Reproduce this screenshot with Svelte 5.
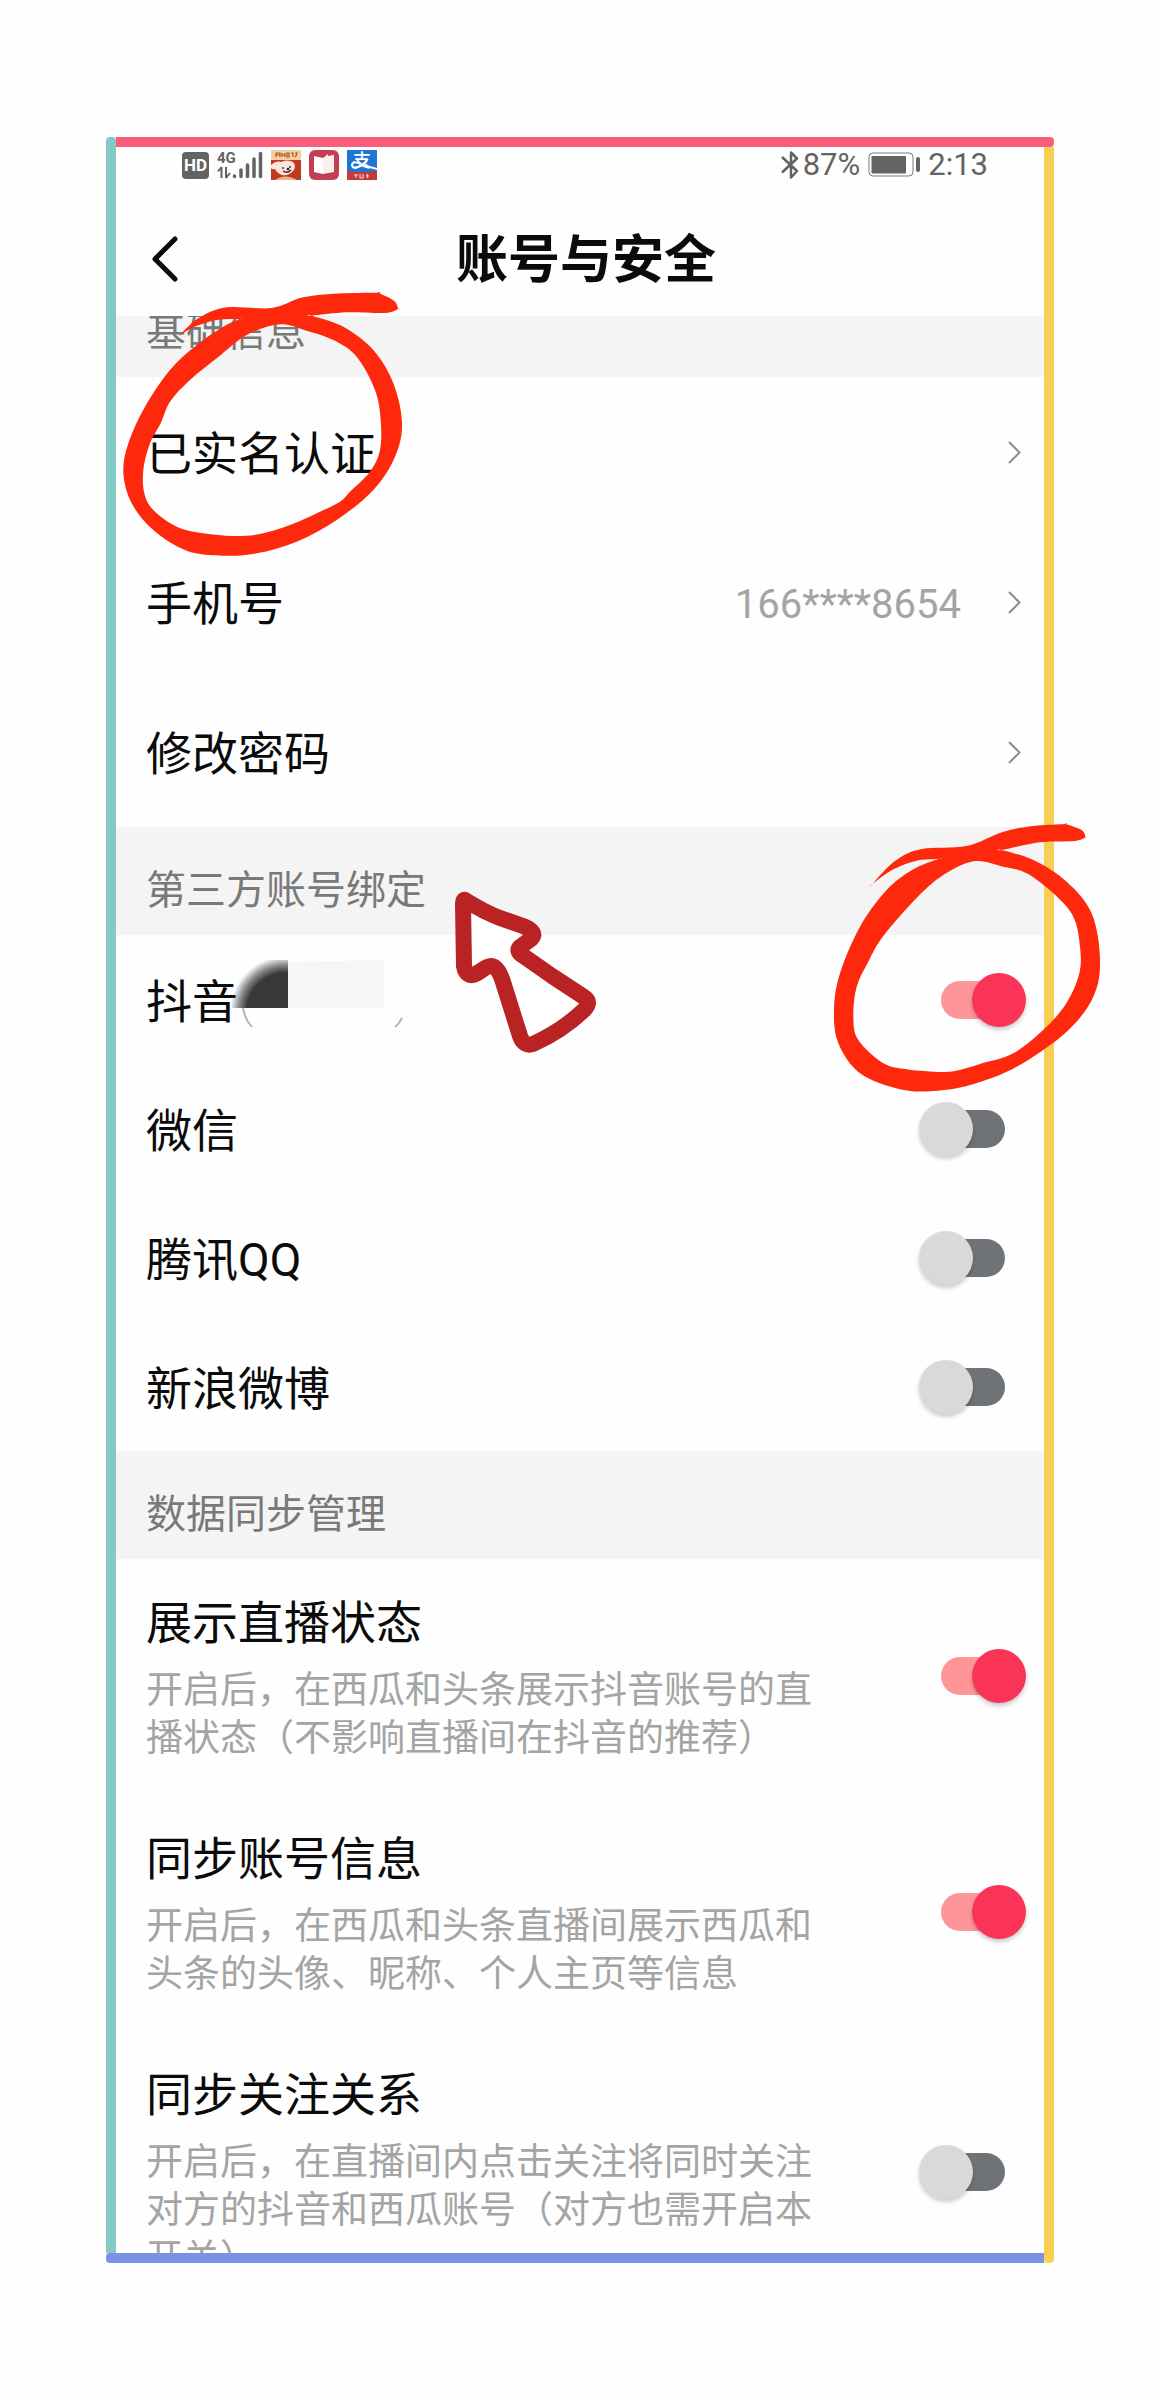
<script lang="ts">
  interface SyncItem {
    id: string;
    title: string;
    description: string;
    enabled: boolean;
  }

  type Point = [number, number];

  const links = [
    { id: 'realname', label: '已实名认证', value: '' },
    { id: 'phone', label: '手机号', value: '166****8654' },
    { id: 'password', label: '修改密码', value: '' },
  ];

  let accounts = [
    { id: 'douyin', label: '抖音', enabled: true, masked: true },
    { id: 'wechat', label: '微信', enabled: false, masked: false },
    { id: 'qq', label: '腾讯QQ', enabled: false, masked: false },
    { id: 'weibo', label: '新浪微博', enabled: false, masked: false },
  ];

  let syncItems: SyncItem[] = [
    {
      id: 'live',
      title: '展示直播状态',
      description: '开启后，在西瓜和头条展示抖音账号的直播状态（不影响直播间在抖音的推荐）',
      enabled: true,
    },
    {
      id: 'profile',
      title: '同步账号信息',
      description: '开启后，在西瓜和头条直播间展示西瓜和头条的头像、昵称、个人主页等信息',
      enabled: true,
    },
    {
      id: 'follow',
      title: '同步关注关系',
      description: '开启后，在直播间内点击关注将同时关注对方的抖音和西瓜账号（对方也需开启本开关）',
      enabled: false,
    },
  ];

  // marker strokes: outer edge, then the hole inside the loop
  const markLeft: Point[][] = [
    [
      [265, 140], [265, 140], [325, 85], [410, 52], [545, 54], [640, 22], [760, 10], [865, 8], [865, 8], [912, 32],
      [925, 57], [925, 57], [885, 69], [770, 67], [665, 77], [665, 77], [760, 110], [850, 180], [910, 280], [936, 400],
      [915, 500], [850, 600], [740, 690], [620, 755], [500, 790], [400, 797], [290, 782], [190, 720], [125, 640],
      [100, 550], [115, 460], [165, 350], [240, 240], [320, 165], [400, 110], [450, 87], [450, 87], [380, 90], [310, 112],
    ],
    [
      [570, 103], [470, 135], [380, 205], [300, 270], [240, 335], [212, 400], [180, 460], [160, 540], [163, 610],
      [190, 660], [260, 710], [340, 730], [430, 738], [510, 732], [600, 705], [690, 665], [750, 635], [780, 605],
      [840, 545], [870, 480], [872, 390], [855, 300], [800, 200], [730, 150], [650, 122],
    ],
  ];

  const markRight: Point[][] = [
    [
      [217, 312], [217, 312], [285, 243], [365, 207], [500, 198], [610, 155], [700, 138], [797, 132], [797, 132],
      [845, 150], [857, 172], [857, 172], [825, 183], [720, 187], [605, 210], [605, 210], [700, 240], [800, 305],
      [875, 400], [900, 540], [880, 650], [800, 755], [650, 860], [510, 915], [400, 933], [300, 928], [180, 880],
      [115, 790], [102, 690], [120, 580], [180, 440], [260, 330], [340, 268], [415, 237], [415, 237], [350, 242],
      [280, 268],
    ],
    [
      [520, 244], [420, 292], [330, 375], [245, 475], [205, 545], [170, 620], [160, 710], [175, 780], [250, 850],
      [320, 868], [400, 875], [465, 873], [540, 852], [640, 820], [735, 745], [800, 668], [838, 580], [840, 500],
      [820, 410], [760, 340], [680, 280], [610, 260],
    ],
  ];

  function smooth(points: Point[]): string {
    const n = points.length;
    let d = `M${points[0][0]} ${points[0][1]}`;
    for (let i = 0; i < n; i++) {
      const p0 = points[(i - 1 + n) % n];
      const p1 = points[i];
      const p2 = points[(i + 1) % n];
      const p3 = points[(i + 2) % n];
      d += `C${p1[0] + (p2[0] - p0[0]) / 6} ${p1[1] + (p2[1] - p0[1]) / 6}`;
      d += ` ${p2[0] - (p3[0] - p1[0]) / 6} ${p2[1] - (p3[1] - p1[1]) / 6}`;
      d += ` ${p2[0]} ${p2[1]}`;
    }
    return d + 'Z';
  }

  const markPath = (outlines: Point[][]) => outlines.map(smooth).join('');
</script>

<main class="page">
  <div class="frame">
    <i class="edge edge-top"></i>
    <i class="edge edge-left"></i>
    <i class="edge edge-right"></i>
    <i class="edge edge-bottom"></i>

    <div class="screen">
      <div class="status">
        <div class="status-group">
          <span class="hd">HD</span>
          <svg class="signal" width="46" height="30" viewBox="0 0 46 30" aria-label="4G">
            <text x="0" y="13" font-size="15">4G</text>
            <path d="M4.500 17V28M4.500 17L1 21.500M9 17V28M9 28L13 23" fill="none" stroke="#636363" stroke-width="2" />
            <path d="M17.500 26V26.500M24 20V26.500M30.500 15V26.500M37 9V26.500M43.500 3.500V26.500" stroke="#636363" stroke-width="3.500" stroke-linecap="round" />
          </svg>
          <div class="apps">
            <svg width="30" height="30" viewBox="0 0 30 30">
              <rect width="30" height="30" fill="#c03a26" />
              <rect width="30" height="10" fill="#f6cfa0" />
              <path d="M5 3H9V7M5 3V7M5 5H9M11 3V7M11 5H14M14 3V7M16 3V7H18V3ZM20 3H22V7M24 3H26L24.500 7" fill="none" stroke="#a8542c" stroke-width="1.200" />
              <path d="M0 15Q5 10 10 12Q16 9 22 12Q26 16 22 21Q18 26 11 25Q6 23 4 19Q1 20 0 18Z" fill="#fbe6dc" />
              <path d="M12 17V19M19 16V18M12 21Q16 24 20 20" fill="none" stroke="#43241e" stroke-width="1.400" />
              <circle cx="17" cy="19" r="1.300" fill="#2b1a1a" />
              <path d="M4 30Q14 23 26 30Z" fill="#e9b48d" />
            </svg>
            <svg width="30" height="30" viewBox="0 0 30 30">
              <rect width="30" height="30" rx="6" fill="#c43e53" />
              <path d="M5 6L14 8V24L5 22Z" fill="#fff" />
              <path d="M14 8L19 4V6L25 5V22L14 24Z" fill="#fdeef0" />
            </svg>
            <svg width="30" height="30" viewBox="0 0 30 30">
              <rect width="30" height="30" fill="#1f75d3" />
              <text class="alipay" x="6" y="17" font-size="18">支</text>
              <path d="M14 14Q6 10 5 15Q6 20 13 16Q20 12 20 9M17 14Q23 18 30 19" fill="none" stroke="#fff" stroke-width="2" />
              <path d="M0 21Q15 23 30 21V30H0Z" fill="#c23b3b" />
              <path d="M7 25H11M9 24V28M13 24V28H16V24M19 26H22M20.500 24V28" fill="none" stroke="#f3d0c8" stroke-width="1.200" />
            </svg>
          </div>
        </div>
        <div class="status-group status-right">
          <svg width="18" height="30" viewBox="0 0 18 30">
            <path d="M1 7L16 21L10 27.500V2.500L16 8.500L1 22.500" fill="none" stroke="#636363" stroke-width="2.500" stroke-linejoin="round" />
          </svg>
          <span>87%</span>
          <svg class="battery" width="52" height="26" viewBox="0 0 52 26">
            <rect x="1" y="1" width="44" height="23" rx="4" fill="none" stroke="#7a7a7a" />
            <rect x="3.500" y="4" width="34.500" height="17.500" rx="1" fill="#636363" />
            <rect x="48" y="5" width="4" height="15" rx="2" fill="#636363" />
          </svg>
          <span>2:13</span>
        </div>
      </div>

      <header class="header">
        <button class="back" type="button" aria-label="返回">
          <svg width="26" height="46" viewBox="0 0 26 46">
            <path d="M23 3L3 23L23 43" fill="none" stroke="#0b0b0b" stroke-width="5" stroke-linecap="round" stroke-linejoin="round" />
          </svg>
        </button>
        <h1>账号与安全</h1>
      </header>

      <div class="list">
        <h2 class="section section-scrolled">基础信息</h2>
        {#each links as link (link.id)}
          <a class="row row-link" href="#{link.id}">
            <span class="label">{link.label}</span>
            <span class="value">{link.value}</span>
            <svg width="13" height="23" viewBox="0 0 13 23">
              <path d="M1 1L11.500 11.500L1 22" fill="none" stroke="#8e8e8e" stroke-width="2" />
            </svg>
          </a>
        {/each}

        <h2 class="section">第三方账号绑定</h2>
        {#each accounts as account (account.id)}
          <div class="row row-account">
            <label class="label" for={account.id}>{account.label}</label>
            {#if account.masked}
              <svg class="mask" width="180" height="72" viewBox="0 0 180 72">
                <defs>
                  <radialGradient id="smudge" gradientUnits="userSpaceOnUse" cx="54" cy="52" r="56">
                    <stop offset="0.700" stop-color="#383838" />
                    <stop offset="0.840" stop-color="#383838" stop-opacity="0.600" />
                    <stop offset="1" stop-color="#383838" stop-opacity="0" />
                  </radialGradient>
                </defs>
                <rect x="0" y="0" width="56" height="48" fill="url(#smudge)" />
                <path d="M56 2L152 0V48H56Z" fill="#f6f6f4" />
                <path d="M11 48Q13 60 20 67M170 58Q167 64 163 67" fill="none" stroke="#b5b5b5" stroke-width="2" />
              </svg>
            {/if}
            <input class="switch" id={account.id} type="checkbox" role="switch" bind:checked={account.enabled} />
          </div>
        {/each}

        <h2 class="section">数据同步管理</h2>
        {#each syncItems as item (item.id)}
          <div class="row row-sync">
            <div class="text">
              <label class="label" for={item.id}>{item.title}</label>
              <p class="description">{item.description}</p>
            </div>
            <input class="switch" id={item.id} type="checkbox" role="switch" bind:checked={item.enabled} />
          </div>
        {/each}
      </div>
    </div>

    <svg class="mark mark-left" width="400" height="300" viewBox="0 0 1200 900">
      <path d={markPath(markLeft)} fill="#fe280c" fill-rule="evenodd" />
    </svg>
    <svg class="mark mark-right" width="320" height="400" viewBox="0 0 960 1200">
      <path d={markPath(markRight)} fill="#fe280c" fill-rule="evenodd" />
    </svg>
    <svg class="mark mark-arrow" width="160" height="170" viewBox="0 0 160 170">
      <path
        d="M15 10C28 18 36 23 50 28L73 36Q88 42 81 49L70 57Q66 61 72 65L102 86L134 107Q142 112 134 120Q112 141 83 154Q74 157 70 146L53 92Q48 76 41 76C34 76 26 87 20 85Q15 83 14 76L13 14Q13 9 15 10Z"
        fill="#fff"
        stroke="#b92323"
        stroke-width="16"
        stroke-linejoin="round"
      />
    </svg>
  </div>
</main>

<style>
  :global(body) {
    background: #fefefe;
  }

  .page {
    display: flex;
    box-sizing: border-box;
    height: 100vh;
    padding: 137px 100px 137px 106px;
    font-family: Roboto, 'Noto Sans CJK SC', sans-serif;
    color: #0b0b0b;
  }

  .frame {
    position: relative;
    flex: 1;
    min-width: 0;
    display: grid;
    grid-template-columns: 10px minmax(0, 1fr) 10px;
    grid-template-rows: 10px minmax(0, 1fr) 10px;
    grid-template-areas:
      'left top top'
      'left screen right'
      'bottom bottom right';
  }

  .edge-top {
    grid-area: top;
    background: #f85e7b;
    border-radius: 0 4px 4px 0;
  }

  .edge-left {
    grid-area: left;
    background: #85c9c6;
    border-radius: 4px 4px 0 0;
  }

  .edge-right {
    grid-area: right;
    background: #f9cf53;
    border-radius: 0 0 4px 4px;
  }

  .edge-bottom {
    grid-area: bottom;
    background: #7b91e6;
    border-radius: 4px 0 0 4px;
  }

  .screen {
    grid-area: screen;
    display: flex;
    flex-direction: column;
    overflow: hidden;
  }

  .status {
    flex: none;
    display: flex;
    justify-content: space-between;
    height: 36px;
    padding: 0 56px 0 66px;
    color: #636363;
    font-size: 31px;
    line-height: 36px;
  }

  .status-group {
    display: flex;
    align-items: center;
    gap: 8px;
  }

  .status-right {
    gap: 4px;
  }

  .battery {
    margin: 0 4px;
  }

  .hd {
    width: 27px;
    border-radius: 4px;
    background: #636363;
    color: #fff;
    font-size: 17px;
    font-weight: 700;
    line-height: 27px;
    text-align: center;
  }

  .signal text {
    fill: #636363;
    font-weight: 700;
  }

  .apps {
    display: flex;
    gap: 8px;
  }

  .alipay {
    fill: #fff;
    font-weight: 500;
  }

  .header {
    flex: none;
    display: grid;
    grid-template-columns: 92px 1fr 80px;
    align-items: center;
    box-sizing: border-box;
    height: 133px;
    padding-top: 18px;
  }

  .back {
    display: flex;
    padding: 0 0 0 36px;
    border: none;
    background: none;
    cursor: pointer;
  }

  h1 {
    margin: 0;
    padding-top: 4px;
    font-size: 52px;
    font-weight: 700;
    line-height: 60px;
    text-align: center;
  }

  .list {
    flex: 1;
    min-height: 0;
    overflow: hidden;
  }

  .section {
    box-sizing: border-box;
    height: 108px;
    margin: 0;
    padding: 20px 30px 0;
    background: #f4f4f4;
    color: #797979;
    font-size: 40px;
    font-weight: 400;
    line-height: 88px;
  }

  .section-scrolled {
    margin-top: -47px;
  }

  .row {
    display: flex;
    align-items: center;
    justify-content: space-between;
    box-sizing: border-box;
    padding: 0 18px 0 30px;
  }

  .row-link {
    height: 150px;
    padding-right: 23px;
    color: inherit;
    text-decoration: none;
  }

  .row-account {
    position: relative;
    height: 129px;
  }

  .label {
    display: block;
    padding-top: 4px;
    font-size: 46px;
    line-height: 60px;
  }

  .value {
    flex: 1;
    margin-right: 47px;
    padding-top: 4px;
    color: #a4a4a4;
    font-size: 40px;
    text-align: right;
  }

  .mask {
    position: absolute;
    top: 25px;
    left: 116px;
  }

  .row-sync {
    padding-top: 30px;
    padding-bottom: 32px;
  }

  .text {
    max-width: 670px;
  }

  .description {
    margin: 14px 0 0;
    color: #a4a4a4;
    font-size: 37px;
    line-height: 48px;
  }

  .switch {
    flex: none;
    appearance: none;
    display: grid;
    align-items: center;
    width: 107px;
    height: 54px;
    margin: 0;
    cursor: pointer;
  }

  .switch::before,
  .switch::after {
    content: '';
    grid-area: 1 / 1;
  }

  .switch::before {
    justify-self: center;
    width: 64px;
    height: 38px;
    border-radius: 19px;
    background: #6f7377;
  }

  .switch::after {
    width: 54px;
    height: 54px;
    border-radius: 50%;
    background: #d9d9d9;
    box-shadow: 0 3px 4px rgba(0, 0, 0, 0.2);
  }

  .switch:checked::before {
    background: #fe9698;
  }

  .switch:checked::after {
    justify-self: end;
    background: #f93456;
  }

  .mark {
    position: absolute;
    pointer-events: none;
  }

  .mark-left {
    top: 153px;
    left: -16px;
  }

  .mark-right {
    top: 643px;
    right: -66px;
  }

  .mark-arrow {
    top: 753px;
    left: 344px;
  }
</style>
